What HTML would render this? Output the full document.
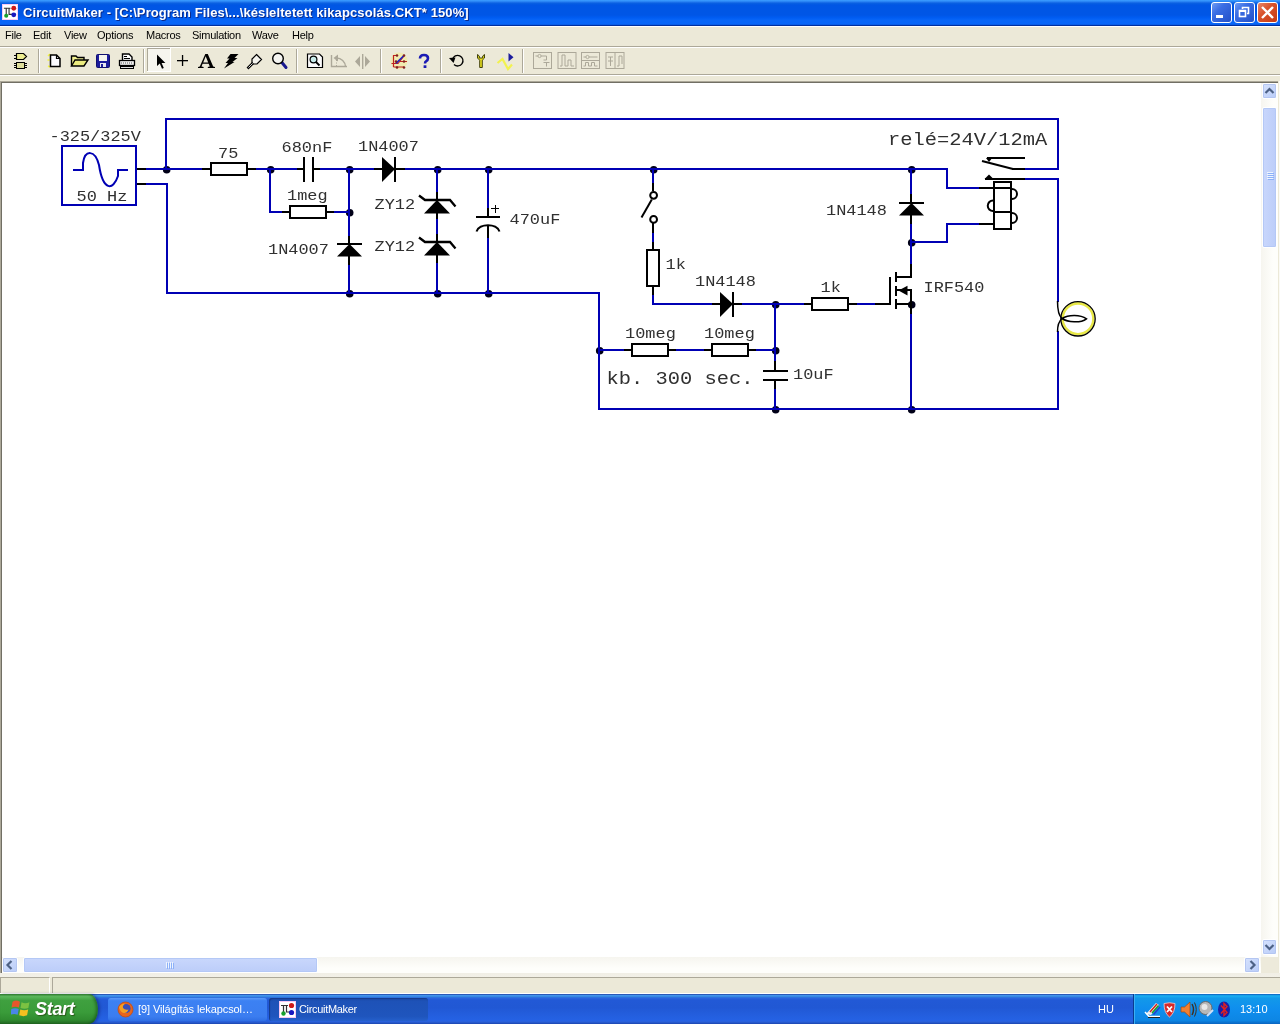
<!DOCTYPE html>
<html><head><meta charset="utf-8">
<style>
*{margin:0;padding:0;box-sizing:border-box}
html,body{width:1280px;height:1024px;overflow:hidden;background:#ece9d8;font-family:"Liberation Sans",sans-serif}
.abs{position:absolute}
#title{left:0;top:0;width:1280px;height:26px;background:linear-gradient(to bottom,#3c9cff 0,#3292fa 3.8%,#1a70ea 9%,#0860e2 13%,#0056e4 19%,#0056e6 58%,#005cf2 68%,#0866f8 78%,#0866f8 93%,#0a50d0 96.2%,#0030a0 96.3%,#0030a0 100%)}
#title .t{left:23px;top:5px;color:#fff;font-size:13px;font-weight:bold;letter-spacing:0.1px;white-space:nowrap;text-shadow:1px 1px 0 #0a2a8a}
#menu{left:0;top:26px;width:1280px;height:20px;background:#ece9d8;border-top:1px solid #fff}
#menu span{position:absolute;top:2px;font-size:11px;letter-spacing:-0.25px;color:#000;white-space:nowrap}
#tb{left:0;top:46px;width:1280px;height:30px;background:#ece9d8;border-top:1px solid #aca899;border-bottom:1px solid #fff}
#tb:before{content:"";position:absolute;left:0;top:0;width:100%;height:1px;background:#fff}
#tb:after{content:"";position:absolute;left:0;top:27px;width:100%;height:1px;background:#aca899}
.sep{position:absolute;top:2px;width:2px;height:25px;border-left:1px solid #aca899;border-right:1px solid #fff}
#canvas{left:0;top:81px;width:1280px;height:893px;background:#fff;border-left:1px solid #aca899;border-top:1px solid #aca899}
#canvas:before{content:"";position:absolute;left:0;top:0;width:1279px;height:892px;border-left:1px solid #716f64;border-top:1px solid #716f64}
#vs{left:1261px;top:83px;width:17px;height:874px;background:linear-gradient(to right,#f6f5ef,#fefefb 70%)}
#hs{left:2px;top:957px;width:1259px;height:16px;background:linear-gradient(to bottom,#f6f5ef,#fefefb 70%)}
.sbtn{position:absolute;width:15px;height:15px;background:linear-gradient(135deg,#d6e2fd,#b9ccf8);border:1px solid #fff;border-radius:2px;box-shadow:0 0 0 1px #b4c6f2 inset}
.thumb{position:absolute;background:linear-gradient(to right,#c9d7fc,#bccdf9);border:1px solid #fff;border-radius:2px;box-shadow:0 0 0 1px #b4c8f6 inset}
#status{left:0;top:973px;width:1280px;height:20px;background:linear-gradient(to bottom,#f1efe6 0,#f3f1e8 4px,#ece9d8 4px)}
#task{left:0;top:993px;width:1280px;height:31px;border-top:1px solid #fff;background:linear-gradient(to bottom,#2a5ab8 0,#2a5ab8 3.3%,#4496ee 3.4%,#3f90ea 7%,#2e7fd8 10%,#2d66e2 13%,#2259d6 20%,#2158d4 45%,#235ddc 65%,#2562e4 88%,#2a60d8 93%,#1b45ae 100%)}

.wb{top:2px;width:21px;height:21px;border:1px solid #fff;border-radius:3px;background:linear-gradient(135deg,#6f9cf4 0%,#3b6ee4 35%,#2350c8 100%);overflow:hidden}
.wb svg{position:absolute;left:-1px;top:-1px}
#start{left:0;top:994px;width:98px;height:30px;border-radius:0 9px 9px 0/0 15px 15px 0;background:linear-gradient(to bottom,#3a8a3a 0%,#5cb85c 8%,#3fa03f 22%,#3a9c3a 60%,#308c30 85%,#256d25 100%);box-shadow:inset -2px 0 3px rgba(0,40,0,.4), 2px 0 3px rgba(0,0,60,.35)}
.tbtn{top:998px;width:159px;height:23px;border-radius:3px;color:#fff;font-size:11px;white-space:nowrap}
#tray{left:1133px;top:994px;width:147px;height:30px;background:linear-gradient(to bottom,#0c59b9 0%,#19b0f2 6%,#1299ea 14%,#0f8eee 50%,#0d86e4 88%,#0a64c0 100%);border-left:1px solid #0a3c90;box-shadow:inset 1px 0 0 #3bb0f4}
span,.t{will-change:transform}
</style></head><body>
<div id="title" class="abs"><div class="t abs">CircuitMaker - [C:\Program Files\...\késleltetett kikapcsolás.CKT* 150%]</div></div>
<div id="menu" class="abs">
<span style="left:5px">File</span><span style="left:33px">Edit</span><span style="left:64px">View</span><span style="left:97px">Options</span><span style="left:146px">Macros</span><span style="left:192px">Simulation</span><span style="left:252px">Wave</span><span style="left:292px">Help</span>
</div>
<div id="tb" class="abs"></div>
<svg class="abs" style="left:0;top:46px;will-change:transform" width="640" height="32" viewBox="0 46 640 32">
<rect x="38" y="49" width="1" height="24" fill="#aca899"/><rect x="39" y="49" width="1" height="24" fill="#fff"/>
<rect x="143" y="49" width="1" height="24" fill="#aca899"/><rect x="144" y="49" width="1" height="24" fill="#fff"/>
<rect x="296" y="49" width="1" height="24" fill="#aca899"/><rect x="297" y="49" width="1" height="24" fill="#fff"/>
<rect x="380" y="49" width="1" height="24" fill="#aca899"/><rect x="381" y="49" width="1" height="24" fill="#fff"/>
<rect x="440" y="49" width="1" height="24" fill="#aca899"/><rect x="441" y="49" width="1" height="24" fill="#fff"/>
<rect x="522" y="49" width="1" height="24" fill="#aca899"/><rect x="523" y="49" width="1" height="24" fill="#fff"/>
<rect x="147" y="48" width="24" height="24" fill="#f6f5ee"/><rect x="147" y="48" width="24" height="1" fill="#aca899"/><rect x="147" y="48" width="1" height="24" fill="#aca899"/><rect x="147" y="71" width="24" height="1" fill="#fff"/><rect x="170" y="48" width="1" height="24" fill="#fff"/>
<g shape-rendering="crispEdges"><path d="M16.500 53.500 H23.500 L26.500 56.500 L23.500 59.500 H16.500Z" fill="#ecec90" stroke="#000" stroke-width="1.200" shape-rendering="auto"/><rect x="14" y="55" width="3" height="1" fill="#000"/><rect x="14" y="58" width="3" height="1" fill="#000"/><rect x="16.500" y="62.500" width="8" height="6" fill="#dede9c" stroke="#000" stroke-width="1"/><rect x="14" y="63" width="2" height="1" fill="#000"/><rect x="14" y="65" width="2" height="1" fill="#000"/><rect x="14" y="67" width="2" height="1" fill="#000"/><rect x="25" y="63" width="2" height="1" fill="#000"/><rect x="25" y="65" width="2" height="1" fill="#000"/><rect x="25" y="67" width="2" height="1" fill="#000"/></g>
<path d="M48 56 l2-2 M47.5 60 h2 M48 66 l2 1" stroke="#f4f440" stroke-width="1.6"/><path d="M50.5 55 H56.5 L60 58.5 V66.5 H50.5Z" fill="#fbfbff" stroke="#000" stroke-width="1.5"/><path d="M56.5 55 V58.5 H60" fill="none" stroke="#000" stroke-width="1.2"/>
<path d="M71.5 66 V56 H76 L77.5 57.5 H84 V60" fill="#f0f090" stroke="#000" stroke-width="1.4"/><path d="M71.5 66 L75 60 H88 L84 66Z" fill="#ecec80" stroke="#000" stroke-width="1.4"/>
<rect x="96.5" y="54.5" width="13" height="13" rx="1" fill="#1c1c9c" stroke="#101070" stroke-width="1"/><rect x="99" y="55" width="8" height="6" fill="#f4f4ee"/><rect x="100" y="63" width="6" height="4" fill="#e8e8f0"/><rect x="101" y="64" width="2" height="3" fill="#1c1c9c"/>
<path d="M122.5 60 V54 H129 L132 57 V60" fill="#fff" stroke="#000" stroke-width="1.4"/><rect x="124" y="56" width="3" height="1" fill="#000"/><rect x="124" y="58" width="6" height="1" fill="#000"/><rect x="119.5" y="60.5" width="15" height="5" fill="#f0f0f0" stroke="#000" stroke-width="1.3"/><path d="M121 63 h12" stroke="#555" stroke-width="1" stroke-dasharray="1 1"/><rect x="120.5" y="66.5" width="13" height="2" fill="#ddd" stroke="#000" stroke-width="1"/>
<path d="M157 54.5 V66 L159.8 63.6 L162 68.8 L163.8 68 L161.6 63 H165.4Z" fill="#000"/>
<rect x="177" y="60" width="11" height="1.3" fill="#000"/><rect x="181.9" y="55" width="1.3" height="11" fill="#000"/>
<path fill-rule="evenodd" d="M205.300 54 H207.800 L213.200 66.400 L215 67 V68 H207.800 V67 L209.800 66.600 L208.700 63.800 H202.600 L201.500 66.500 L203.600 67 V68 H198 V67 L199.800 66.500Z M203.200 62.500 H208.200 L205.700 56.300Z" fill="#000"/>
<path d="M230.500 54 H238.500 L234.500 58 H237.500 L232.500 62 H234.500 L224 68.500 L228 63 H225.500 L229.500 58.500 H227Z" fill="#000"/>
<path d="M256.5 54.5 L261.5 59.5 L257 64 H253 L252 62.5 V59Z" fill="#f4f4ee" stroke="#000" stroke-width="1.2"/><path d="M253 63 L247.5 68.5" stroke="#000" stroke-width="2.6"/><path d="M252.6 63.4 L248.4 67.6" stroke="#eee" stroke-width="0.9"/>
<path d="M281.5 62 L286 67.5" stroke="#1a1a90" stroke-width="3" stroke-linecap="round"/><circle cx="278" cy="58.5" r="5.3" fill="#f4f4f0" stroke="#000" stroke-width="1.4"/>
<path d="M307.5 54 H319.5 L322.5 57 V67.5 H307.5Z" fill="#fcfcfc" stroke="#000" stroke-width="1.2"/><circle cx="313.5" cy="59.5" r="3.4" fill="#c8ecec" stroke="#000" stroke-width="1.2"/><path d="M316 62 L319.5 65.5" stroke="#000" stroke-width="1.8"/>
<path d="M331.500 55 V66.500 H347" fill="none" stroke="#aca899" stroke-width="1.4"/><path d="M336.500 58 A9 9 0 0 1 345.500 66.500" fill="none" stroke="#aca899" stroke-width="1.4"/><path d="M333.500 58 L338 54.500 V61.500Z" fill="#aca899"/><path d="M336.500 60 V66" stroke="#aca899" stroke-width="1" stroke-dasharray="1 1.500"/>
<rect x="362" y="54" width="1.400" height="15" fill="#aca899"/><path d="M360 56 V67 L355 61.500Z M365 56 V67 L370 61.500Z" fill="#aca899"/>
<circle cx="399" cy="61" r="8.5" fill="#f4ec90" opacity="0.55"/><path d="M393.500 55 V67 M393.500 55.500 H397 M391.500 63.500 H398 L404 56 M393.500 67 H404 M400 61.500 H407" fill="none" stroke="#c02020" stroke-width="1.200"/><path d="M396 63.400 L404 55.500" stroke="#2020c0" stroke-width="1.600"/><g fill="#802020"><circle cx="397" cy="55.500" r="1.300"/><circle cx="404" cy="55.500" r="1.300"/><circle cx="396" cy="61.500" r="1.300"/><circle cx="404" cy="61.500" r="1.300"/><circle cx="397" cy="67.500" r="1.300"/><circle cx="404" cy="67.500" r="1.300"/></g>
<path d="M420 58.500 Q420 55 424 55 Q428 55 428 58.300 Q428 60.300 426 61.300 Q425 61.800 425 63.500" fill="none" stroke="#1a1ab4" stroke-width="2.600"/><rect x="423.600" y="65.300" width="2.800" height="2.700" fill="#1a1ab4"/>
<path d="M452.500 59.500 A5.300 5.300 0 1 1 454 64.500" fill="none" stroke="#000" stroke-width="1.300"/><path d="M449 58 L455.500 57.500 L453.500 63Z" fill="#000"/>
<path d="M477.500 54.500 V58 L479.700 60.200 V67.500 H482.300 V60.200 L484.500 58 V54.500 L482.700 56 V58 H479.300 V56Z" fill="#e8e020" stroke="#303000" stroke-width="0.900"/>
<path d="M497.500 63 L502.500 59 L508 69 L512 64.500" fill="none" stroke="#f2f250" stroke-width="2.200"/><path d="M508.500 53 V61.500 L513.500 57.200Z" fill="#1c1c9c"/>
<rect x="533.5" y="52.500" width="18" height="16" fill="none" stroke="#aca899" stroke-width="1"/>
<path d="M535.5 56 H546.5 V60 M543.5 62.500 H549.5 M546.5 62.500 V66.500 M546.5 60 H543.5" fill="none" stroke="#aca899" stroke-width="1"/><circle cx="539.5" cy="56" r="1.600" fill="#ece9d8" stroke="#aca899" stroke-width="0.900"/>
<rect x="558.0" y="52.500" width="18" height="16" fill="none" stroke="#aca899" stroke-width="1"/>
<path d="M560.0 66 H562.0 V55 H565.0 V66 H568.0 V60 H571.0 V66 H574.0" fill="none" stroke="#aca899" stroke-width="1"/>
<rect x="581.5" y="52.500" width="18" height="16" fill="none" stroke="#aca899" stroke-width="1"/>
<path d="M583.5 57 H597.5 M581.5 60.500 H599.5 M583.5 66 H585.5 V62.500 H588.5 V66 H591.5 V62.500 H594.5 V66 H597.5" fill="none" stroke="#aca899" stroke-width="1"/><circle cx="587.5" cy="57" r="1.600" fill="#ece9d8" stroke="#aca899" stroke-width="0.900"/>
<rect x="606.0" y="52.500" width="18" height="16" fill="none" stroke="#aca899" stroke-width="1"/>
<path d="M615.0 52.500 V68.500 M608.0 57 H613.0 M610.5 57 V66 M608.0 61 H613.0 M617.0 66 H619.0 V56 H622.0 V64" fill="none" stroke="#aca899" stroke-width="1"/>
</svg>
<div id="canvas" class="abs"></div>
<div id="vs" class="abs"></div>
<div id="hs" class="abs"></div>
<div class="abs" style="left:1278px;top:81px;width:2px;height:893px;background:#ece9d8;border-right:1px solid #fbfaf5"></div>
<div class="abs" style="left:1261px;top:957px;width:17px;height:17px;background:#edeadb"></div>
<div id="status" class="abs"></div>
<div id="task" class="abs"></div>
<!-- title icon -->
<svg class="abs" style="left:2px;top:4px" width="16" height="16" viewBox="0 0 17 17"><rect x="0" y="0" width="17" height="17" fill="#f7c8f4"/><rect x="1" y="1" width="15" height="15" fill="#fff"/><path d="M2 4.500 H9 M4.500 4.500 V12 M7.500 4.500 V11 H11" fill="none" stroke="#333" stroke-width="1.200"/><circle cx="12.500" cy="4.500" r="2.600" fill="#d01818"/><circle cx="12.500" cy="11.500" r="2.600" fill="#1818c0"/><circle cx="4.500" cy="12.500" r="2.200" fill="#18a030"/></svg>
<!-- window buttons -->
<div class="wb abs" style="left:1211px"><svg width="21" height="21"><rect x="5" y="13" width="7" height="3" fill="#fff"/></svg></div>
<div class="wb abs" style="left:1234px"><svg width="21" height="21"><path d="M8.500 7 V5.500 H14.500 V11.500 H13" fill="none" stroke="#fff" stroke-width="1.600"/><rect x="5.500" y="8.500" width="6" height="6" fill="none" stroke="#fff" stroke-width="1.600"/><rect x="5" y="8" width="7" height="2" fill="#fff"/></svg></div>
<div class="wb abs" style="left:1257px;background:linear-gradient(135deg,#e8866a 0%,#d9532c 40%,#c63a14 100%)"><svg width="21" height="21"><path d="M5 5 L16 16 M16 5 L5 16" stroke="#fff" stroke-width="2.400"/></svg></div>
<!-- v scrollbar parts -->
<div class="sbtn" style="left:1262px;top:83px;width:15px;height:16px"><svg width="14" height="14" viewBox="0 0 14 14"><path d="M2.500 9 L6.500 5 L10.500 9" fill="none" stroke="#4d6185" stroke-width="2.200"/></svg></div>
<div class="thumb" style="left:1262px;top:107px;width:15px;height:141px"><svg class="abs" style="left:4px;top:64px" width="7" height="9"><path d="M0 0.500H6M0 2.500H6M0 4.500H6M0 6.500H6" stroke="#eef4fe" stroke-width="1"/><path d="M1 1.500H7M1 3.500H7M1 5.500H7M1 7.500H7" stroke="#8cb0f8" stroke-width="1"/></svg></div>
<div class="sbtn" style="left:1262px;top:939px;width:15px;height:16px"><svg width="14" height="14" viewBox="0 0 14 14"><path d="M2.500 5 L6.500 9 L10.500 5" fill="none" stroke="#4d6185" stroke-width="2.200"/></svg></div>
<!-- h scrollbar parts -->
<div class="sbtn" style="left:2px;top:957px;width:16px;height:16px"><svg width="14" height="14" viewBox="0 0 14 14"><path d="M8.500 3 L4.500 7 L8.500 11" fill="none" stroke="#4d6185" stroke-width="2.200"/></svg></div>
<div class="thumb" style="left:23px;top:957px;width:295px;height:16px;background:linear-gradient(to bottom,#c9d7fc,#bccdf9)"><svg class="abs" style="left:142px;top:4px" width="9" height="7"><path d="M0.500 0V6M2.500 0V6M4.500 0V6M6.500 0V6" stroke="#eef4fe" stroke-width="1"/><path d="M1.500 1V7M3.500 1V7M5.500 1V7M7.500 1V7" stroke="#8cb0f8" stroke-width="1"/></svg></div>
<div class="sbtn" style="left:1244px;top:957px;width:16px;height:16px"><svg width="14" height="14" viewBox="0 0 14 14"><path d="M5.500 3 L9.500 7 L5.500 11" fill="none" stroke="#4d6185" stroke-width="2.200"/></svg></div>
<!-- status panels -->
<div class="abs" style="left:0;top:977px;width:50px;height:16px;border-top:1px solid #aca899;border-left:1px solid #aca899;border-right:1px solid #fff"></div>
<div class="abs" style="left:52px;top:977px;width:1228px;height:16px;border-top:1px solid #aca899;border-left:1px solid #aca899"></div>

<div id="start" class="abs"><svg class="abs" style="left:11px;top:5px" width="20" height="19" viewBox="0 0 19 18"><path d="M1.500 2.500 Q5 0.500 8.500 2.500 L7.500 8 Q4 6.500 0.500 8Z" fill="#e8562c"/><path d="M10 3 Q13.500 5 17.500 3 L16.500 8.500 Q13 10 9 8.500Z" fill="#7cc242"/><path d="M0.300 9.500 Q4 8 7.300 9.500 L6.300 15 Q3 13.500 -0.500 15Z" fill="#4a86e8"/><path d="M8.800 10 Q12.500 11.500 16.300 10 L15.300 15.500 Q12 17 7.800 15.500Z" fill="#f4c020"/></svg><span class="abs" style="left:35px;top:5px;font:italic bold 18px 'Liberation Sans',sans-serif;color:#fff;text-shadow:1px 1px 1px #2a5a1a;letter-spacing:-0.3px">Start</span></div>
<div class="tbtn abs" style="left:108px;background:linear-gradient(to bottom,#5c9af8 0%,#3c81f3 12%,#3b7df0 80%,#2f6fe4 100%)"><svg class="abs" style="left:9px;top:3px" width="17" height="17" viewBox="0 0 17 17"><circle cx="8.500" cy="8.500" r="7.500" fill="#e8641c"/><circle cx="9" cy="7.500" r="4.600" fill="#3a4fb8"/><path d="M2 6 Q4 2.500 8 2.500 Q5.500 4.500 6 7 Q8 9.500 11.500 8.500 Q10 12.500 6.500 12 Q3 11 2 6Z" fill="#f6a020"/><circle cx="8.500" cy="8.500" r="7.500" fill="none" stroke="#c44a12" stroke-width="0.800"/></svg><span class="abs" style="left:30px;top:5px;letter-spacing:-0.1px">[9] Világítás lekapcsol…</span></div>
<div class="tbtn abs" style="left:269px;background:linear-gradient(to bottom,#1a49a8 0%,#1e52b7 15%,#1f55bd 80%,#2560cc 100%);box-shadow:inset 1px 1px 1px #153a8c"><svg class="abs" style="left:10px;top:3px" width="17" height="17" viewBox="0 0 17 17"><rect x="0" y="0" width="17" height="17" fill="#f7c8f4"/><rect x="1" y="1" width="15" height="15" fill="#fff"/><path d="M2 4.500 H9 M4.500 4.500 V12 M7.500 4.500 V11 H11" fill="none" stroke="#333" stroke-width="1.200"/><circle cx="12.500" cy="4.500" r="2.600" fill="#d01818"/><circle cx="12.500" cy="11.500" r="2.600" fill="#1818c0"/><circle cx="4.500" cy="12.500" r="2.200" fill="#18a030"/></svg><span class="abs" style="left:30px;top:5px;letter-spacing:-0.32px">CircuitMaker</span></div>
<span class="abs" style="left:1098px;top:1003px;font-size:11px;color:#fff">HU</span>
<div id="tray" class="abs"></div>
<svg class="abs" style="left:1140px;top:998px" width="100" height="22" viewBox="1140 998 100 22">
<path d="M1146 1014 L1156 1003 L1159 1005 L1151 1015Z" fill="#f0f0f0"/><path d="M1150 1012 L1157 1004" stroke="#d02020" stroke-width="1.500"/><path d="M1152 1013 L1158.500 1005.500" stroke="#20a020" stroke-width="1.500"/><path d="M1153.500 1014.500 L1160 1007" stroke="#2040d0" stroke-width="1.500"/><path d="M1145 1012 L1149 1016.500 H1160" fill="none" stroke="#fff" stroke-width="1.500"/><path d="M1148 1017.500 H1160" stroke="#222" stroke-width="1"/>
<path d="M1164 1003.500 Q1169.500 1002 1175 1003.500 Q1175 1013 1169.500 1017 Q1164 1013 1164 1003.500Z" fill="#d82828" stroke="#f4d0d0" stroke-width="0.800"/><path d="M1167 1006.500 L1172 1012 M1172 1006.500 L1167 1012" stroke="#fff" stroke-width="1.800"/>
<path d="M1181 1007 H1184.500 L1190 1002 V1017 L1184.500 1012 H1181Z" fill="#f08030" stroke="#a04810" stroke-width="0.700"/><path d="M1192 1004 Q1195 1009.500 1192 1015" fill="none" stroke="#403020" stroke-width="1.400"/><path d="M1194.500 1002.500 Q1198 1009.500 1194.500 1016.500" fill="none" stroke="#403020" stroke-width="1"/>
<circle cx="1205.500" cy="1008" r="6.500" fill="#b8b8b8" stroke="#686868" stroke-width="1"/><circle cx="1204.500" cy="1007" r="3" fill="#e8e8e8"/><path d="M1207 1016 L1213 1010" stroke="#cfe0f8" stroke-width="2"/>
<ellipse cx="1224" cy="1009.500" rx="6" ry="8" fill="#1820a8"/><path d="M1221 1005.500 L1227 1012.500 L1224 1015.500 V1003.500 L1227 1006.500 L1221 1013.500" fill="none" stroke="#e02020" stroke-width="1.400"/>
</svg>
<span class="abs" style="left:1240px;top:1003px;font-size:11px;color:#fff">13:10</span>

<svg class="abs" style="left:0;top:0;will-change:transform" width="1280" height="1024" viewBox="0 0 1280 1024" shape-rendering="crispEdges">
<style>.ts{font:15px "Liberation Mono",monospace;fill:#303030}.tb{font:18.8px "Liberation Mono",monospace;fill:#303030}</style>
<circle cx="166.7" cy="169.7" r="3.8" fill="#000018" shape-rendering="auto"/>
<circle cx="270.7" cy="169.7" r="3.8" fill="#000018" shape-rendering="auto"/>
<circle cx="349.7" cy="169.7" r="3.8" fill="#000018" shape-rendering="auto"/>
<circle cx="349.7" cy="212.7" r="3.8" fill="#000018" shape-rendering="auto"/>
<circle cx="349.7" cy="293.7" r="3.8" fill="#000018" shape-rendering="auto"/>
<circle cx="437.7" cy="169.7" r="3.8" fill="#000018" shape-rendering="auto"/>
<circle cx="437.7" cy="293.7" r="3.8" fill="#000018" shape-rendering="auto"/>
<circle cx="488.7" cy="169.7" r="3.8" fill="#000018" shape-rendering="auto"/>
<circle cx="488.7" cy="293.7" r="3.8" fill="#000018" shape-rendering="auto"/>
<circle cx="653.7" cy="169.7" r="3.8" fill="#000018" shape-rendering="auto"/>
<circle cx="599.7" cy="350.7" r="3.8" fill="#000018" shape-rendering="auto"/>
<circle cx="775.7" cy="304.7" r="3.8" fill="#000018" shape-rendering="auto"/>
<circle cx="775.7" cy="350.7" r="3.8" fill="#000018" shape-rendering="auto"/>
<circle cx="775.7" cy="409.7" r="3.8" fill="#000018" shape-rendering="auto"/>
<circle cx="911.7" cy="169.7" r="3.8" fill="#000018" shape-rendering="auto"/>
<circle cx="911.7" cy="242.7" r="3.8" fill="#000018" shape-rendering="auto"/>
<circle cx="911.7" cy="304.7" r="3.8" fill="#000018" shape-rendering="auto"/>
<circle cx="911.7" cy="409.7" r="3.8" fill="#000018" shape-rendering="auto"/>
<rect x="165" y="118" width="894" height="2" fill="#0000b4"/>
<rect x="165" y="118" width="2" height="51" fill="#0000b4"/>
<rect x="1057" y="118" width="2" height="52" fill="#0000b4"/>
<rect x="1024" y="168" width="35" height="2" fill="#0000b4"/>
<rect x="145" y="168" width="58" height="2" fill="#0000b4"/>
<rect x="255" y="168" width="43" height="2" fill="#0000b4"/>
<rect x="319" y="168" width="57" height="2" fill="#0000b4"/>
<rect x="403" y="168" width="545" height="2" fill="#0000b4"/>
<rect x="145" y="183" width="23" height="2" fill="#0000b4"/>
<rect x="166" y="183" width="2" height="111" fill="#0000b4"/>
<rect x="166" y="292" width="434" height="2" fill="#0000b4"/>
<rect x="598" y="292" width="2" height="118" fill="#0000b4"/>
<rect x="598" y="408" width="461" height="2" fill="#0000b4"/>
<rect x="1057" y="178" width="2" height="124" fill="#0000b4"/>
<rect x="1057" y="331" width="2" height="79" fill="#0000b4"/>
<rect x="1024" y="178" width="35" height="2" fill="#0000b4"/>
<rect x="269" y="169" width="2" height="44" fill="#0000b4"/>
<rect x="269" y="211" width="14" height="2" fill="#0000b4"/>
<rect x="333" y="211" width="16" height="2" fill="#0000b4"/>
<rect x="348" y="169" width="2" height="68" fill="#0000b4"/>
<rect x="348" y="264" width="2" height="29" fill="#0000b4"/>
<rect x="436" y="169" width="2" height="23" fill="#0000b4"/>
<rect x="436" y="262" width="2" height="31" fill="#0000b4"/>
<rect x="487" y="169" width="2" height="40" fill="#0000b4"/>
<rect x="487" y="237" width="2" height="56" fill="#0000b4"/>
<rect x="652" y="169" width="2" height="15" fill="#0000b4"/>
<rect x="652" y="232" width="2" height="11" fill="#0000b4"/>
<rect x="652" y="294" width="2" height="11" fill="#0000b4"/>
<rect x="652" y="303" width="61" height="2" fill="#0000b4"/>
<rect x="741" y="303" width="64" height="2" fill="#0000b4"/>
<rect x="600" y="349" width="25" height="2" fill="#0000b4"/>
<rect x="675" y="349" width="30" height="2" fill="#0000b4"/>
<rect x="755" y="349" width="20" height="2" fill="#0000b4"/>
<rect x="774" y="304" width="2" height="58" fill="#0000b4"/>
<rect x="774" y="388" width="2" height="21" fill="#0000b4"/>
<rect x="856" y="303" width="21" height="2" fill="#0000b4"/>
<rect x="910" y="169" width="2" height="26" fill="#0000b4"/>
<rect x="910" y="223" width="2" height="42" fill="#0000b4"/>
<rect x="910" y="313" width="2" height="96" fill="#0000b4"/>
<rect x="946" y="168" width="2" height="21" fill="#0000b4"/>
<rect x="946" y="187" width="34" height="2" fill="#0000b4"/>
<rect x="911" y="241" width="37" height="2" fill="#0000b4"/>
<rect x="946" y="223" width="2" height="20" fill="#0000b4"/>
<rect x="946" y="223" width="34" height="2" fill="#0000b4"/>
<rect x="137" y="168" width="9" height="2" fill="#000"/>
<rect x="137" y="183" width="9" height="2" fill="#000"/>
<rect x="202" y="168" width="8" height="2" fill="#000"/>
<rect x="248" y="168" width="8" height="2" fill="#000"/>
<rect x="297" y="168" width="6" height="2" fill="#000"/>
<rect x="314" y="168" width="6" height="2" fill="#000"/>
<rect x="282" y="211" width="8" height="2" fill="#000"/>
<rect x="326" y="211" width="8" height="2" fill="#000"/>
<rect x="374" y="168" width="9" height="2" fill="#000"/>
<rect x="396" y="168" width="9" height="2" fill="#000"/>
<rect x="348" y="236" width="2" height="8" fill="#000"/>
<rect x="348" y="256" width="2" height="9" fill="#000"/>
<rect x="436" y="192" width="2" height="27" fill="#000"/>
<rect x="436" y="219" width="2" height="15" fill="#0000b4"/>
<rect x="436" y="234" width="2" height="29" fill="#000"/>
<rect x="487" y="208" width="2" height="9" fill="#000"/>
<rect x="487" y="225" width="2" height="13" fill="#000"/>
<rect x="652" y="183" width="2" height="8" fill="#000"/>
<rect x="652" y="223" width="2" height="10" fill="#000"/>
<rect x="652" y="242" width="2" height="8" fill="#000"/>
<rect x="652" y="286" width="2" height="9" fill="#000"/>
<rect x="712" y="303" width="9" height="2" fill="#000"/>
<rect x="734" y="303" width="8" height="2" fill="#000"/>
<rect x="624" y="349" width="8" height="2" fill="#000"/>
<rect x="668" y="349" width="8" height="2" fill="#000"/>
<rect x="704" y="349" width="8" height="2" fill="#000"/>
<rect x="748" y="349" width="8" height="2" fill="#000"/>
<rect x="804" y="303" width="8" height="2" fill="#000"/>
<rect x="848" y="303" width="9" height="2" fill="#000"/>
<rect x="875" y="303" width="16" height="2" fill="#000"/>
<rect x="774" y="361" width="2" height="10" fill="#000"/>
<rect x="774" y="380" width="2" height="9" fill="#000"/>
<rect x="910" y="194" width="2" height="9" fill="#000"/>
<rect x="910" y="215" width="2" height="9" fill="#000"/>
<rect x="910" y="264" width="2" height="14" fill="#000"/>
<rect x="910" y="303" width="2" height="11" fill="#000"/>
<rect x="979" y="187" width="15" height="2" fill="#000"/>
<rect x="979" y="223" width="15" height="2" fill="#000"/>
<rect x="985" y="178" width="40" height="2" fill="#000"/>
<rect x="1012" y="168" width="13" height="2" fill="#000"/>
<rect x="987" y="157" width="38" height="2" fill="#000"/>
<rect x="62" y="146" width="74" height="59" fill="#fff" stroke="#0000b4" stroke-width="2"/>
<path d="M73 170 H83 V163 C85 149.500,95 149.500,99 165 C103 191,113 191,118 176 V170 H128" fill="none" stroke="#0000b4" stroke-width="2" shape-rendering="auto"/>
<rect x="211" y="163" width="36" height="12" fill="#fff" stroke="#000" stroke-width="2"/>
<rect x="290" y="206" width="36" height="12" fill="#fff" stroke="#000" stroke-width="2"/>
<rect x="647" y="250" width="12" height="36" fill="#fff" stroke="#000" stroke-width="2"/>
<rect x="632" y="344" width="36" height="12" fill="#fff" stroke="#000" stroke-width="2"/>
<rect x="712" y="344" width="36" height="12" fill="#fff" stroke="#000" stroke-width="2"/>
<rect x="812" y="298" width="36" height="12" fill="#fff" stroke="#000" stroke-width="2"/>
<rect x="303" y="157" width="2" height="25" fill="#000"/>
<rect x="312" y="157" width="2" height="25" fill="#000"/>
<path d="M382 157 L395 169 L382 182Z" fill="#000" shape-rendering="auto"/>
<rect x="394" y="157" width="2" height="25" fill="#000"/>
<rect x="337" y="243" width="25" height="2" fill="#000"/>
<path d="M349.5 244 L362 256.5 L337 256.5Z" fill="#000" shape-rendering="auto"/>
<path d="M419 195.5 L425 200 H450 L455.5 206.5" fill="none" stroke="#000" stroke-width="2.3" shape-rendering="auto"/>
<path d="M437 200 L450 213.5 L424 213.5Z" fill="#000" shape-rendering="auto"/>
<path d="M419 237.5 L425 242 H450 L455.5 248.5" fill="none" stroke="#000" stroke-width="2.3" shape-rendering="auto"/>
<path d="M437 242 L450 255.5 L424 255.5Z" fill="#000" shape-rendering="auto"/>
<rect x="476" y="216" width="24" height="2" fill="#000"/>
<path d="M476.5 231.5 C479 223,497 223,499.5 231.5" fill="none" stroke="#000" stroke-width="2" shape-rendering="auto"/>
<rect x="491" y="208" width="8" height="1" fill="#000"/><rect x="494.5" y="204.5" width="1" height="8" fill="#000"/>
<circle cx="653.6" cy="195.300" r="3.400" fill="#fff" stroke="#000" stroke-width="2" shape-rendering="auto"/>
<circle cx="653.6" cy="219.400" r="3.400" fill="#fff" stroke="#000" stroke-width="2" shape-rendering="auto"/>
<path d="M651.800 199.500 L641.500 217.500" stroke="#000" stroke-width="2" shape-rendering="auto"/>
<path d="M720 292 L733 304 L720 317Z" fill="#000" shape-rendering="auto"/>
<rect x="732" y="292" width="2" height="25" fill="#000"/>
<rect x="763" y="370" width="25" height="2" fill="#000"/>
<rect x="763" y="379" width="25" height="2" fill="#000"/>
<rect x="899" y="202" width="25" height="2" fill="#000"/>
<path d="M911.5 203 L924 215.5 L899 215.5Z" fill="#000" shape-rendering="auto"/>
<rect x="889" y="277" width="2" height="28" fill="#000"/>
<rect x="895" y="272" width="2" height="10" fill="#000"/>
<rect x="895" y="286" width="2" height="10" fill="#000"/>
<rect x="895" y="299" width="2" height="10" fill="#000"/>
<rect x="896" y="276" width="16" height="2" fill="#000"/>
<rect x="896" y="303" width="16" height="2" fill="#000"/>
<rect x="896" y="289" width="16" height="2" fill="#000"/>
<rect x="910" y="289" width="2" height="15" fill="#000"/>
<path d="M898.5 290.5 L907.5 285.7 V295.5Z" fill="#000" shape-rendering="auto"/>
<path d="M1013 169 L982 161" stroke="#000" stroke-width="2" shape-rendering="auto"/>
<path d="M986 158 L993 157 L989 162Z" fill="#000" shape-rendering="auto"/>
<path d="M984.5 179 L989 174.5 L993.5 179Z" fill="#000" shape-rendering="auto"/>
<rect x="994" y="182" width="17" height="47" fill="#fff" stroke="#000" stroke-width="2"/>
<rect x="994" y="187" width="18" height="2" fill="#000"/>
<rect x="994" y="211" width="18" height="2" fill="#000"/>
<path d="M1012 189 A5 5 0 0 1 1012 199 M1012 213 A5 5 0 0 1 1012 223 M993 200.5 A5 5 0 0 0 993 211" fill="none" stroke="#000" stroke-width="2" shape-rendering="auto"/>
<circle cx="1078" cy="318.800" r="15.400" fill="none" stroke="#e8e848" stroke-width="2.600" shape-rendering="auto"/>
<circle cx="1078" cy="318.800" r="17.200" fill="none" stroke="#000" stroke-width="1.300" shape-rendering="auto"/>
<path d="M1057.5 301 C1057.5 311,1059 316,1062 318.500 C1068 322.300,1080 323.500,1086.500 318.800 C1080 314,1068 314.700,1062 318.500 C1059 321,1057.500 326,1057.500 332" fill="none" stroke="#000" stroke-width="1.5" shape-rendering="auto"/>
<text x="49.5" y="141.3" class="ts" textLength="91.4" lengthAdjust="spacingAndGlyphs">-325/325V</text>
<text x="76.5" y="201.3" class="ts" textLength="50.8" lengthAdjust="spacingAndGlyphs">50 Hz</text>
<text x="218" y="157.8" class="ts" textLength="20.3" lengthAdjust="spacingAndGlyphs">75</text>
<text x="281.5" y="152.3" class="ts" textLength="50.8" lengthAdjust="spacingAndGlyphs">680nF</text>
<text x="287" y="200.3" class="ts" textLength="40.6" lengthAdjust="spacingAndGlyphs">1meg</text>
<text x="358" y="151.3" class="ts" textLength="60.9" lengthAdjust="spacingAndGlyphs">1N4007</text>
<text x="374.5" y="209.3" class="ts" textLength="40.6" lengthAdjust="spacingAndGlyphs">ZY12</text>
<text x="268" y="254.3" class="ts" textLength="60.9" lengthAdjust="spacingAndGlyphs">1N4007</text>
<text x="374.5" y="251.3" class="ts" textLength="40.6" lengthAdjust="spacingAndGlyphs">ZY12</text>
<text x="509.5" y="224.3" class="ts" textLength="50.8" lengthAdjust="spacingAndGlyphs">470uF</text>
<text x="665.5" y="269.3" class="ts" textLength="20.3" lengthAdjust="spacingAndGlyphs">1k</text>
<text x="695" y="286.3" class="ts" textLength="60.9" lengthAdjust="spacingAndGlyphs">1N4148</text>
<text x="625" y="338.3" class="ts" textLength="50.8" lengthAdjust="spacingAndGlyphs">10meg</text>
<text x="704" y="338.3" class="ts" textLength="50.8" lengthAdjust="spacingAndGlyphs">10meg</text>
<text x="820.5" y="292.3" class="ts" textLength="20.3" lengthAdjust="spacingAndGlyphs">1k</text>
<text x="793" y="379.3" class="ts" textLength="40.6" lengthAdjust="spacingAndGlyphs">10uF</text>
<text x="923.5" y="292.3" class="ts" textLength="60.9" lengthAdjust="spacingAndGlyphs">IRF540</text>
<text x="826" y="214.8" class="ts" textLength="60.9" lengthAdjust="spacingAndGlyphs">1N4148</text>
<text x="606.5" y="384.3" class="tb" textLength="147.0" lengthAdjust="spacingAndGlyphs">kb. 300 sec.</text>
<text x="888" y="144.8" class="tb" textLength="159.2" lengthAdjust="spacingAndGlyphs">relé=24V/12mA</text>
</svg>
</body></html>
